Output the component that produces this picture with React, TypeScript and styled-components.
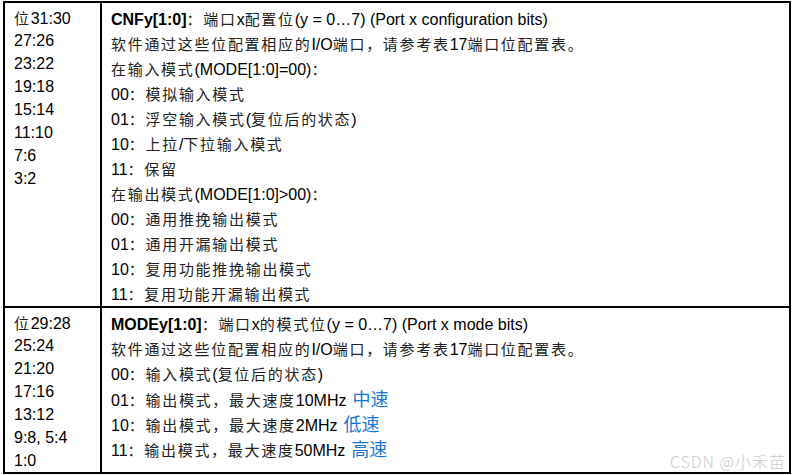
import React from 'react';
import styled, { createGlobalStyle } from 'styled-components';

const GlobalStyle = createGlobalStyle`
  html, body {
    margin: 0;
    background: #fff;
  }
  body {
    font-family: "Liberation Sans", Arial, "Noto Sans CJK SC", sans-serif;
    font-size: 16px;
    color: #000;
  }
`;

interface DescLine {
  text: string,
  speed?: string,
}

interface RegisterRow {
  bits: string[],
  field: string,
  head: string,
  lines: DescLine[],
}

const rows: RegisterRow[] = [
  {
    bits: ['位31:30', '27:26', '23:22', '19:18', '15:14', '11:10', '7:6', '3:2'],
    field: 'CNFy[1:0]',
    head: '：端口x配置位(y = 0…7) (Port x configuration bits)',
    lines: [
      { text: '软件通过这些位配置相应的I/O端口，请参考表17端口位配置表。' },
      { text: '在输入模式(MODE[1:0]=00)：' },
      { text: '00：模拟输入模式' },
      { text: '01：浮空输入模式(复位后的状态)' },
      { text: '10：上拉/下拉输入模式' },
      { text: '11：保留' },
      { text: '在输出模式(MODE[1:0]>00)：' },
      { text: '00：通用推挽输出模式' },
      { text: '01：通用开漏输出模式' },
      { text: '10：复用功能推挽输出模式' },
      { text: '11：复用功能开漏输出模式' },
    ],
  },
  {
    bits: ['位29:28', '25:24', '21:20', '17:16', '13:12', '9:8, 5:4', '1:0'],
    field: 'MODEy[1:0]',
    head: '：端口x的模式位(y = 0…7) (Port x mode bits)',
    lines: [
      { text: '软件通过这些位配置相应的I/O端口，请参考表17端口位配置表。' },
      { text: '00：输入模式(复位后的状态)' },
      { text: '01：输出模式，最大速度10MHz', speed: '中速' },
      { text: '10：输出模式，最大速度2MHz', speed: '低速' },
      { text: '11：输出模式，最大速度50MHz', speed: '高速' },
    ],
  },
];

// chinese runs get their own span so the latin text keeps Arial metrics
const HAN = /([\u2E80-\u9FFF\u3000-\u303F\uFF00-\uFFEF]+)/;

const zh = (text: string) =>
  text.split(HAN).map((part, i) =>
    HAN.test(part) ? <Han key={i}>{part}</Han> : <React.Fragment key={i}>{part}</React.Fragment>
  );

function App() {
  return (
    <Page>
      <GlobalStyle />
      <Table>
        {rows.map((row) => (
          <Row key={row.field}>
            <BitsCell>
              {row.bits.map((b) => (
                <Line key={b} $h={23}>{zh(b)}</Line>
              ))}
            </BitsCell>
            <DescCell>
              <Line $h={25}>
                <Field>{row.field}</Field>
                {zh(row.head)}
              </Line>
              {row.lines.map((line) => (
                <Line key={line.text} $h={25}>
                  {zh(line.text)}
                  {line.speed && <Speed>{line.speed}</Speed>}
                </Line>
              ))}
            </DescCell>
          </Row>
        ))}
        <Watermark>CSDN @小禾苗</Watermark>
      </Table>
    </Page>
  );
}

export default App;

const Page = styled.div`
  padding: 1px 0 0 3px;
`;

const Table = styled.div`
  position: relative;
  width: 788px;
  box-sizing: border-box;
  border: 2px solid #000;
`;

const Row = styled.div`
  display: grid;
  grid-template-columns: 97px 1fr;

  & + & {
    border-top: 2px solid #000;
  }
`;

const BitsCell = styled.div`
  padding: 3px 0 0 9px;
  border-right: 2px solid #000;
`;

const DescCell = styled.div`
  padding: 3px 0 0 9px;
`;

const Line = styled.div<{ $h: number }>`
  height: ${(p) => p.$h}px;
  line-height: ${(p) => p.$h}px;
  white-space: nowrap;
`;

const Han = styled.span`
  font-family: "Noto Sans CJK SC", sans-serif;
  font-size: 15px;
  letter-spacing: 1.7px;
  color: #222;
`;

const Field = styled.b`
  font-weight: bold;
`;

const Speed = styled.span`
  margin-left: 6px;
  font-family: "Noto Sans CJK SC", sans-serif;
  font-size: 18px;
  color: #1677d2;
`;

const Watermark = styled.div`
  position: absolute;
  right: 3px;
  bottom: 1px;
  font-family: "Noto Sans CJK SC", sans-serif;
  font-size: 16px;
  font-weight: 300;
  letter-spacing: 1px;
  line-height: 20px;
  color: #cbcbcb;
  pointer-events: none;
`;
